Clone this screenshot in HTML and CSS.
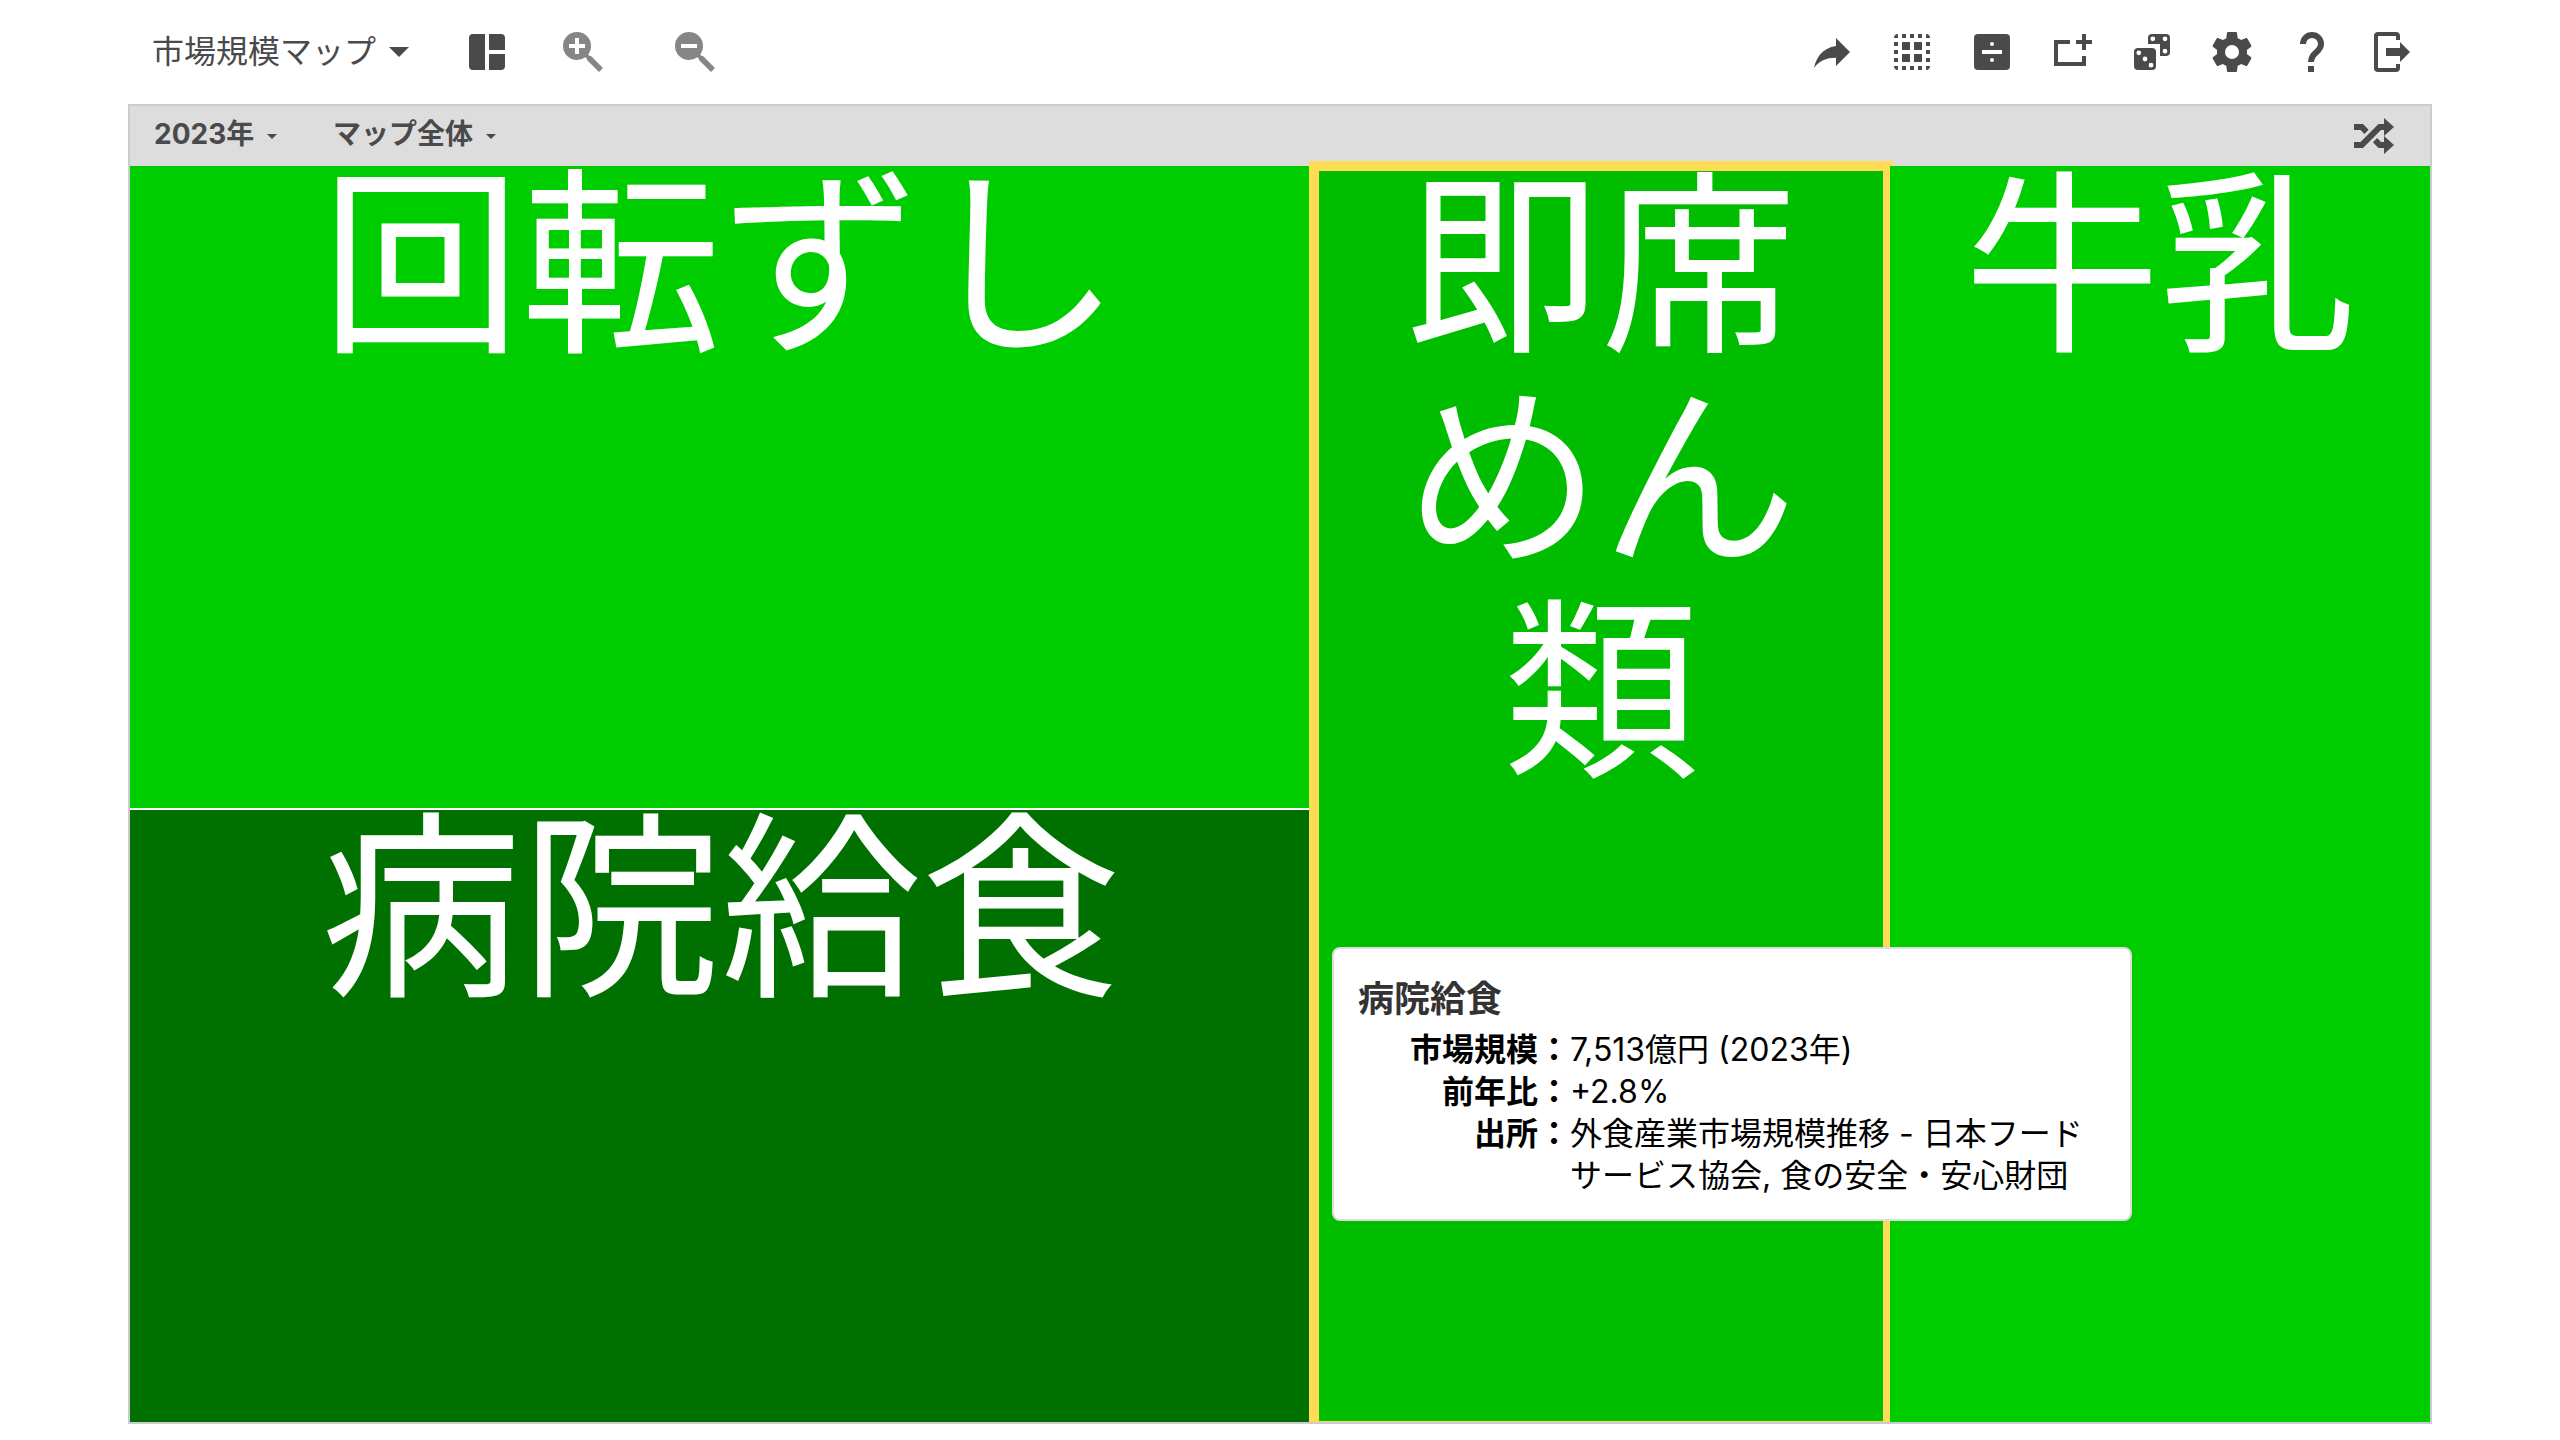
FILE: index.html
```html
<!DOCTYPE html>
<html lang="ja">
<head>
<meta charset="utf-8">
<title>市場規模マップ</title>
<link rel="stylesheet" href="styles.css">
</head>
<body>
<div class="app">
  <header class="toolbar">
    <div class="group">
      <label class="picker picker-title">
        <select aria-label="マップの種類"><option>市場規模マップ</option></select>
        <span class="caret"></span>
      </label>
      <button class="icon layout-button" aria-label="レイアウト"><svg viewBox="0 0 24 24"><path d="M5 3h6v18H5a2 2 0 0 1-2-2V5a2 2 0 0 1 2-2zM13 3h6a2 2 0 0 1 2 2v6h-8zM13 13h8v6a2 2 0 0 1-2 2h-6z"/></svg></button>
      <div class="zoom">
        <button class="icon" aria-label="拡大"><svg viewBox="0 0 24 24"><path d="M9 2a7 7 0 0 1 7 7c0 1.57-.5 3-1.39 4.19l.8.81H16l6 6-2 2-6-6v-.59l-.81-.8A6.92 6.92 0 0 1 9 16a7 7 0 0 1-7-7 7 7 0 0 1 7-7M8 5v3H5v2h3v3h2v-3h3V8h-3V5z"/></svg></button>
        <button class="icon" aria-label="縮小"><svg viewBox="0 0 24 24"><path d="M9 2a7 7 0 0 1 7 7c0 1.57-.5 3-1.39 4.19l.8.81H16l6 6-2 2-6-6v-.59l-.81-.8A6.92 6.92 0 0 1 9 16a7 7 0 0 1-7-7 7 7 0 0 1 7-7M5 8v2h8V8z"/></svg></button>
      </div>
    </div>
    <div class="actions">
      <button class="icon" aria-label="共有"><svg viewBox="0 0 24 24"><path d="M14 9V5l7 7-7 7v-4.100c-5 0-8.500 1.600-11 5.100 1-5 4-10 11-11z"/></svg></button>
      <button class="icon" aria-label="すべて選択"><svg viewBox="0 0 24 24"><path d="M5 3v2H3a2 2 0 0 1 2-2zM7 3h2v2H7zM11 3h2v2h-2zM15 3h2v2h-2zM19 3a2 2 0 0 1 2 2h-2zM3 7h2v2H3zM3 11h2v2H3zM3 15h2v2H3zM19 7h2v2h-2zM19 11h2v2h-2zM19 15h2v2h-2zM3 19h2v2a2 2 0 0 1-2-2zM7 19h2v2H7zM11 19h2v2h-2zM15 19h2v2h-2zM19 19h2a2 2 0 0 1-2 2zM7 7h4v4H7zM13 7h4v4h-4zM7 13h4v4H7zM13 13h4v4h-4z"/></svg></button>
      <button class="icon" aria-label="分割"><svg viewBox="0 0 24 24"><path fill-rule="evenodd" d="M5 3h14a2 2 0 0 1 2 2v14a2 2 0 0 1-2 2H5a2 2 0 0 1-2-2V5a2 2 0 0 1 2-2zM7 11v2h10v-2zM12 7a1 1 0 0 0 0 2 1 1 0 0 0 0-2zM12 15a1 1 0 0 0 0 2 1 1 0 0 0 0-2z"/></svg></button>
      <button class="icon" aria-label="追加"><svg viewBox="0 0 24 24"><path d="M3 6h8v2H5v9h12v-3h2v5H3zM17 3h2v3h3v2h-3v3h-2V8h-3V6h3z"/></svg></button>
      <button class="icon" aria-label="ランダム"><svg viewBox="0 0 24 24"><path fill-rule="evenodd" d="M12 3h7a2 2 0 0 1 2 2v7a2 2 0 0 1-2 2h-3V8h-6V5a2 2 0 0 1 2-2zM12.400 4.200a1.200 1.200 0 0 0 0 2.400 1.200 1.200 0 0 0 0-2.400zM18.500 4.200a1.200 1.200 0 0 0 0 2.400 1.200 1.200 0 0 0 0-2.400zM18.500 10.400a1.200 1.200 0 0 0 0 2.400 1.200 1.200 0 0 0 0-2.400zM5 10h7a2 2 0 0 1 2 2v7a2 2 0 0 1-2 2H5a2 2 0 0 1-2-2v-7a2 2 0 0 1 2-2zM5.400 11.200a1.200 1.200 0 0 0 0 2.400 1.200 1.200 0 0 0 0-2.400zM8.500 14.300a1.200 1.200 0 0 0 0 2.400 1.200 1.200 0 0 0 0-2.400zM11.500 17.400a1.200 1.200 0 0 0 0 2.400 1.200 1.200 0 0 0 0-2.400z"/></svg></button>
      <button class="icon" aria-label="設定"><svg viewBox="0 0 24 24"><path d="M19.430 12.980c.04-.32.07-.64.07-.98s-.03-.66-.07-.98l2.110-1.650c.19-.15.24-.42.12-.64l-2-3.460c-.12-.22-.39-.3-.61-.22l-2.490 1c-.52-.4-1.080-.73-1.690-.98l-.38-2.650A.49.49 0 0 0 14 2h-4c-.25 0-.46.18-.49.42l-.38 2.650c-.61.25-1.170.59-1.690.98l-2.490-1c-.23-.09-.49 0-.61.22l-2 3.460c-.13.22-.07.49.12.64l2.110 1.650c-.04.32-.07.65-.07.98s.03.66.07.98l-2.110 1.650c-.19.15-.24.42-.12.64l2 3.460c.12.22.39.3.61.22l2.490-1c.52.4 1.080.73 1.690.98l.38 2.650c.03.24.24.42.49.42h4c.25 0 .46-.18.49-.42l.38-2.650c.61-.25 1.170-.59 1.690-.98l2.490 1c.23.09.49 0 .61-.22l2-3.460c.12-.22.07-.49-.12-.64zM12 15.500a3.500 3.500 0 1 1 0-7 3.500 3.500 0 0 1 0 7z"/></svg></button>
      <button class="icon" aria-label="ヘルプ"><svg viewBox="0 0 24 24"><path fill="none" stroke="currentColor" stroke-width="3" d="M7.500 8c0-2.600 2-4.500 4.500-4.500s4.500 1.900 4.500 4.500c0 1.800-1 2.900-2.300 4.100C12.700 13.500 11.500 14.500 11.500 17"/><path d="M10 19h3v3h-3z"/></svg></button>
      <button class="icon" aria-label="終了"><svg viewBox="0 0 24 24"><path d="M5 2h9a2 2 0 0 1 2 2v2h-2V4H5v16h9v-2h2v2a2 2 0 0 1-2 2H5a2 2 0 0 1-2-2V4a2 2 0 0 1 2-2zM16 7l5 5-5 5v-3H9v-4h7z"/></svg></button>
    </div>
  </header>

  <main class="frame">
    <div class="filters">
      <label class="picker">
        <select aria-label="年"><option>2023年</option></select>
        <span class="caret caret-small"></span>
      </label>
      <label class="picker">
        <select aria-label="表示範囲"><option>マップ全体</option></select>
        <span class="caret caret-small"></span>
      </label>
      <button class="icon shuffle" aria-label="シャッフル"><svg viewBox="0 0 24 24"><path d="M17 3l5 4.500L17 12l5 4.500L17 21v-3h-2.740l-2.820-2.820 2.120-2.120L15.500 15H17V9h-1.500l-9 9H2v-3h3.260l9-9H17zM2 6h4.500l2.820 2.820-2.120 2.120L5.260 9H2z"/></svg></button>
    </div>
    <div class="map">
      <section class="tile tile-sushi"><h2>回転ずし</h2></section>
      <section class="tile tile-hospital"><h2>病院給食</h2></section>
      <section class="tile tile-noodles"><h2>即席めん類</h2></section>
      <div class="highlight"></div>
      <section class="tile tile-milk"><h2>牛乳</h2></section>
    </div>
    <aside class="tooltip" role="tooltip">
      <h3>病院給食</h3>
      <dl>
        <dt>市場規模：</dt><dd>7,513億円 (2023年)</dd>
        <dt>前年比：</dt><dd>+2.8%</dd>
        <dt>出所：</dt><dd>外食産業市場規模推移 - 日本フードサービス協会, 食の安全・安心財団</dd>
      </dl>
    </aside>
  </main>
</div>
</body>
</html>
```
FILE: styles.css
```css
* {
  box-sizing: border-box;
}

body {
  margin: 0;
  background: #fff;
  color: #4a4a4a;
  font-family: Inter, "Noto Sans CJK JP", sans-serif;
}

button,
select {
  margin: 0;
  padding: 0;
  border: 0;
  background: none;
  color: inherit;
  font: inherit;
}

.app {
  display: flex;
  flex-direction: column;
  min-height: 100vh;
  padding: 0 5% 16px;
}

.toolbar {
  display: flex;
  justify-content: space-between;
  align-items: center;
  height: 104px;
  padding: 0 16px 0 24px;
}

.group,
.actions,
.zoom {
  display: flex;
  align-items: center;
}

.actions {
  gap: 32px;
}

.zoom {
  gap: 64px;
  margin-left: 48px;
  color: #868686;
}

.layout-button {
  margin-left: 54px;
}

.icon {
  display: block;
  width: 48px;
  height: 48px;
}

.icon svg {
  display: block;
  width: 48px;
  height: 48px;
  fill: currentColor;
}

.picker {
  display: flex;
  align-items: center;
  gap: 12px;
}

.picker select {
  appearance: none;
  line-height: 48px;
}

.picker-title {
  font-size: 32px;
}

.caret {
  border: 10px solid transparent;
  border-top-color: currentColor;
  border-bottom: 0;
}

.caret-small {
  border-width: 5px;
  border-bottom: 0;
}

.frame {
  position: relative;
  display: flex;
  flex: 1;
  flex-direction: column;
  border: 2px solid #ccc;
}

.filters {
  display: flex;
  align-items: center;
  gap: 56px;
  height: 60px;
  padding: 0 32px 0 24px;
  background: #ddd;
  font-size: 28px;
  font-weight: 700;
}

.filters select {
  padding-bottom: 4px;
}

.shuffle {
  margin-left: auto;
}

.map {
  display: grid;
  flex: 1;
  grid-template-columns: 1182fr 574fr 540fr;
  grid-template-rows: 642fr 612fr;
  gap: 2px;
  clip-path: inset(-5px 0 0);
}

.tile {
  min-width: 0;
  color: #fff;
  text-align: center;
}

.tile h2 {
  margin: -8px 0 0;
  font-size: 200px;
  font-weight: 400;
  line-height: 213px;
}

.tile-sushi {
  grid-area: 1 / 1;
  background: #00cd00;
}

.tile-hospital {
  grid-area: 2 / 1;
  background: #007000;
}

.tile-noodles {
  grid-area: 1 / 2 / 3 / 3;
  padding: 0 60px;
  background: #00bd00;
}

.tile-noodles h2,
.tile-milk h2 {
  font-size: 196px;
}

.tile-milk {
  z-index: 2;
  grid-area: 1 / 3 / 3 / 4;
  background: #00cd00;
}

.highlight {
  z-index: 1;
  grid-area: 1 / 2 / 3 / 3;
  margin: -5px -5px -9px;
  border: 10px solid #ffdc55;
}

.tooltip {
  position: absolute;
  z-index: 3;
  top: 841px;
  left: 1202px;
  width: 800px;
  padding: 26px 24px 22px;
  border: 2px solid #ddd;
  border-radius: 8px;
  background: #fff;
  color: #000;
}

.tooltip h3 {
  margin: 0 0 6px;
  color: #333;
  font-size: 36px;
  font-weight: 700;
  line-height: 48px;
}

.tooltip dl {
  display: grid;
  grid-template-columns: 212px 1fr;
  margin: 0;
  font-size: 32px;
  line-height: 42px;
}

.tooltip dt {
  font-weight: 700;
  text-align: right;
}

.tooltip dd {
  margin: 0;
}
```
